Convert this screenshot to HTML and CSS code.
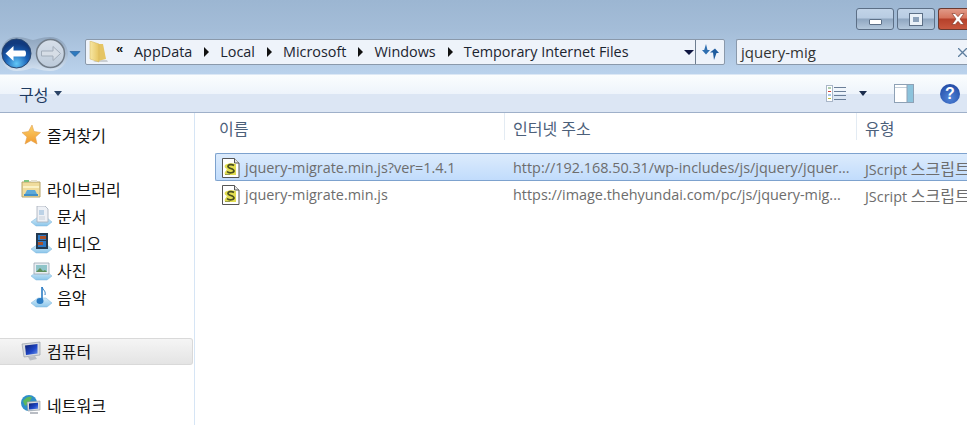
FILE: index.html
```html
<!DOCTYPE html>
<html lang="ko">
<head>
<meta charset="utf-8">
<title>Temporary Internet Files</title>
<link rel="stylesheet" href="styles.css">
</head>
<body>
<svg class="defs" width="0" height="0"><defs>
  <radialGradient id="gBack" cx="50%" cy="85%" r="70%"><stop offset="0" stop-color="#62c8f7"/><stop offset=".55" stop-color="#1a62b8"/><stop offset="1" stop-color="#113a7e"/></radialGradient>
  <linearGradient id="gFwd" x1="0" y1="0" x2="0" y2="1"><stop offset="0" stop-color="#d7dfe9"/><stop offset="1" stop-color="#bccada"/></linearGradient>
  <linearGradient id="gLobe" x1="0" y1="0" x2="0" y2="1"><stop offset="0" stop-color="#8ea4bd"/><stop offset=".5" stop-color="#a9bdd4"/><stop offset="1" stop-color="#d5e3f2"/></linearGradient>
  <linearGradient id="gFolder" x1="0" y1="0" x2="1" y2="0"><stop offset="0" stop-color="#f7e7a4"/><stop offset="1" stop-color="#e6c562"/></linearGradient>
  <linearGradient id="gStar" x1="0" y1="0" x2="0" y2="1"><stop offset="0" stop-color="#fbd26a"/><stop offset="1" stop-color="#f29a2e"/></linearGradient>
  <linearGradient id="gPlate" x1="0" y1="0" x2="0" y2="1"><stop offset="0" stop-color="#d3ebf9"/><stop offset="1" stop-color="#8cc6ea"/></linearGradient>
  <linearGradient id="gScreen" x1="0" y1="0" x2="1" y2="1"><stop offset="0" stop-color="#0b1c6a"/><stop offset=".6" stop-color="#1f47c8"/><stop offset="1" stop-color="#6d96ea"/></linearGradient>
  <symbol id="js" viewBox="0 0 18 20"><path d="M.5.500h12l4.500 4.500v14.500H.5z" fill="#fff" stroke="#555"/><path d="M12.500.500v4.500H17" fill="#e6e6e6" stroke="#555"/><path d="M3 7c3-2 8-2 11-1v11H5c-2 0-3-1-2-3l2-3c-2-1-3-2-2-4z" fill="#e3de52"/><path d="M12 7.500c-2-1.500-6-1-6 1 0 2.500 6 1.500 6 4.500 0 2-5 2.500-7 .5" fill="none" stroke="#4a4f20" stroke-width="1.700"/><path d="M3 16.500h5" stroke="#9aa04a"/></symbol>
  <symbol id="plate" viewBox="0 0 21 21"><path d="M0 16l7-5h8l6 5-5 4H5z" fill="url(#gPlate)" stroke="#7fb7dc" stroke-width=".5"/></symbol>
</defs></svg>
<div class="window">
  <header class="chrome">
    <div class="caption">
      <button class="capbtn"><span class="glyph-min"></span></button>
      <button class="capbtn"><span class="glyph-max"></span></button>
      <button class="capbtn close"><svg width="14" height="12" viewBox="0 0 14 12"><path d="M1 .5h3.200L7 3.700 9.800.5H13L9 6l4 5.500H9.800L7 8.300 4.200 11.500H1L5 6z" fill="#fff" stroke="#7a3020" stroke-width=".6"/></svg></button>
    </div>
    <div class="navrow">
      <svg class="navgroup" width="85" height="36" viewBox="0 0 85 36">
        <path d="M17 1c9 0 13 3 16 3s8-3 17-3c10 0 18 7 18 17s-8 17-18 17c-9 0-14-3-17-3s-7 3-16 3C7 35 1 28 1 18S7 1 17 1z" fill="url(#gLobe)"/>
        <circle cx="16.500" cy="17.500" r="14.500" fill="url(#gBack)" stroke="#29466f"/>
        <path d="M5.500 17.500l8-7.500v4.500h11c2 0 2 6 0 6h-11v4.500z" fill="#fff"/>
        <circle cx="50.500" cy="17.500" r="14" fill="url(#gFwd)" stroke="#717c88" stroke-width="1.500"/>
        <path d="M60.500 17.500l-7.500-7v4.500H41.500v5H53v4.500z" fill="#d6dde6" stroke="#a2adba"/>
        <path d="M70 15.500h10l-5 5z" fill="#2c79bf" stroke="#1d5896" stroke-width=".6"/>
      </svg>
      <div class="address">
        <svg class="folder" width="19" height="22" viewBox="0 0 19 22"><path d="M8 19h10l1 2H4z" fill="#c9ced3"/><path d="M9 3h5l3 15-8 2z" fill="#e5c565"/><path d="M1 0l9 3v18l-9-3z" fill="url(#gFolder)" stroke="#d0b25a" stroke-width=".5"/></svg>
        <span class="chev">«</span>
        <span class="crumb">AppData</span><i class="sep"></i>
        <span class="crumb">Local</span><i class="sep"></i>
        <span class="crumb">Microsoft</span><i class="sep"></i>
        <span class="crumb">Windows</span><i class="sep"></i>
        <span class="crumb">Temporary Internet Files</span>
        <span class="addr-drop"></span>
        <span class="refresh"><svg width="17" height="17" viewBox="0 0 17 17"><path d="M4 0l1.500 6H8l-4 4.500L0 6h2.200z" fill="#2f6fb0"/><path d="M12 16l-1-7.500H8l5-4 4 4.500h-2.500z" fill="#1f5c9e"/></svg></span>
      </div>
      <div class="search">
        <span>jquery-mig</span>
        <svg class="clear" width="9" height="9" viewBox="0 0 9 9"><path d="M0 0l9 9M9 0L0 9" stroke="#5f7f9f" stroke-width="1.300"/></svg>
      </div>
    </div>
    <div class="toolbar">
      <span class="organize">구성</span><span class="tri"></span>
      <span class="tools">
        <svg width="20" height="17" viewBox="0 0 20 17"><rect x=".5" y=".5" width="6" height="16" fill="#fff" stroke="#a9b6c8"/><path d="M2 3h3" stroke="#5a9a5a"/><path d="M2 6.500h3" stroke="#d0403a"/><path d="M2 10h3" stroke="#4a90d0"/><path d="M2 13.500h3" stroke="#c0c040"/><path d="M8 2.500h12M8 6.500h12M8 10.500h12M8 14.500h12" stroke="#6b7f99"/></svg>
        <span class="tri dark"></span>
        <svg class="pane" width="20" height="19" viewBox="0 0 20 19"><rect x=".5" y=".5" width="19" height="18" fill="#fff" stroke="#8ea1b5"/><rect x="13" y="1" width="6" height="17" fill="#8cc3dc"/><path d="M1 3.500h12" stroke="#c3ced9"/><path d="M13 1v17" stroke="#8ea1b5"/></svg>
        <span class="help">?</span>
      </span>
    </div>
  </header>
  <div class="body">
    <nav class="sidebar">
      <div class="row">
        <svg class="ico" width="20" height="20" viewBox="0 0 20 20"><path d="M11 0l2 6.500 6.500 1-5 4.500 1.500 7-6-3.500L4 19l2-7L1 7.500 7.500 6.500z" fill="url(#gStar)" stroke="#e0a050" stroke-width=".6"/></svg>
        <span>즐겨찾기</span>
      </div>
      <div class="gap"></div>
      <div class="row">
        <svg class="ico" width="20" height="20" viewBox="0 0 20 20"><path d="M1 3h18v15H1z" fill="#f0dc9c" stroke="#b5a46c"/><path d="M3 1h5v2H3z" fill="#7fc47f"/><path d="M10 1h6v2h-6z" fill="#e5e1d0"/><path d="M2 7h16v2H2z" fill="#fbf2c6"/><path d="M6 11h8l2 4H4z" fill="#5ea9d8"/><path d="M3 15h14v2H3z" fill="#3f8fc8"/></svg>
        <span>라이브러리</span>
      </div>
      <div class="row sub">
        <svg class="ico" width="21" height="21" viewBox="0 0 21 21"><use href="#plate"/><path d="M6 0h8l3 3v13H6z" fill="#eef1f6" stroke="#a5adba" stroke-width=".8"/><path d="M8 4h5v5H8z" fill="#bcd2e6"/><path d="M8 11h6M8 13h6" stroke="#c8d0da"/></svg>
        <span>문서</span>
      </div>
      <div class="row sub">
        <svg class="ico" width="21" height="21" viewBox="0 0 21 21"><use href="#plate"/><path d="M5 0h12v16H5z" fill="#24394f"/><path d="M7 2h8v5H7z" fill="#2c79c7"/><path d="M7 8h8v6H7z" fill="#2c79c7"/><path d="M9 3h6v3H9zM7 9h5v3H7z" fill="#a8512a"/></svg>
        <span>비디오</span>
      </div>
      <div class="row sub">
        <svg class="ico" width="21" height="21" viewBox="0 0 21 21"><use href="#plate"/><path d="M3 3h15v11H3z" fill="#e9eef3" stroke="#9aa5b1" stroke-width=".8"/><path d="M5 5h11v7H5z" fill="#8fc4c9"/><path d="M5 12l4-4 3 3 2-1 2 2z" fill="#5f8f5a"/></svg>
        <span>사진</span>
      </div>
      <div class="row sub">
        <svg class="ico" width="21" height="21" viewBox="0 0 21 21"><use href="#plate"/><path d="M11 0v13" stroke="#2b7cc4" stroke-width="1.600"/><path d="M11 0c1 3 4 4 3 8" stroke="#2b7cc4" fill="none"/><ellipse cx="9" cy="14" rx="3.500" ry="3" fill="#2b7cc4"/></svg>
        <span>음악</span>
      </div>
      <div class="gap"></div>
      <div class="row active">
        <svg class="ico" width="20" height="20" viewBox="0 0 20 20"><path d="M1 3l18-2v13L3 16z" fill="#d8dbe0" stroke="#8c939c" stroke-width=".6"/><path d="M4 4.500l12.500-1.500v9.500L5 14z" fill="url(#gScreen)"/><path d="M7 16l7-1 2 3-7 1.500z" fill="#b9bdc4"/></svg>
        <span>컴퓨터</span>
      </div>
      <div class="gap"></div>
      <div class="row">
        <svg class="ico" width="20" height="20" viewBox="0 0 20 20"><circle cx="8" cy="8" r="8" fill="#2f8fc9"/><path d="M2 6c3-4 6-5 9-4L8 8l-4 3z" fill="#5cb85c"/><path d="M6 7l13-1v9L7 16z" fill="#d8dbe0" stroke="#8c939c" stroke-width=".6"/><path d="M8 8.500l9-.8v6l-9 .8z" fill="url(#gScreen)"/><path d="M9 17h8v2H9z" fill="#b9bdc4"/></svg>
        <span>네트워크</span>
      </div>
    </nav>
    <main class="list">
      <div class="cols head">
        <div class="c1">이름</div>
        <div class="c2">인터넷 주소</div>
        <div class="c3">유형</div>
      </div>
      <div class="cols file selected">
        <div class="c1"><svg class="jsico" width="18" height="20" viewBox="0 0 18 20"><use href="#js"/></svg>jquery-migrate.min.js?ver=1.4.1</div>
        <div class="c2">http://192.168.50.31/wp-includes/js/jquery/jquer...</div>
        <div class="c3">JScript <span class="ko">스크립트</span></div>
      </div>
      <div class="cols file">
        <div class="c1"><svg class="jsico" width="18" height="20" viewBox="0 0 18 20"><use href="#js"/></svg>jquery-migrate.min.js</div>
        <div class="c2">https://image.thehyundai.com/pc/js/jquery-mig...</div>
        <div class="c3">JScript <span class="ko">스크립트</span></div>
      </div>
    </main>
  </div>
</div>
</body>
</html>
```

FILE: styles.css
```css
* { box-sizing: border-box; }
html, body { margin: 0; height: 100%; }
body {
  width: 967px;
  height: 425px;
  overflow: hidden;
  background: #fff;
  font-family: "Open Sans", "Noto Sans CJK KR", sans-serif;
  font-size: 14.4px;
}
.window { display: flex; flex-direction: column; height: 425px; }
.chrome {
  height: 113px;
  flex: none;
  background: linear-gradient(#9cb6d2 0, #a4bdd8 30px, #bad2ec 74px);
  border-bottom: 1px solid #9fb0c9;
  display: flex;
  flex-direction: column;
}
.caption { height: 39px; padding-top: 8px; display: flex; justify-content: flex-end; gap: 3px; }
.capbtn {
  width: 38px; height: 22px; padding: 0;
  border: 1px solid #5c6f86; border-radius: 3px;
  background: linear-gradient(#c2d4e8 0, #b8cce2 45%, #8fa6c0 50%, #b4c8dc 100%);
  display: flex; align-items: center; justify-content: center;
}
.capbtn.close {
  width: 29px; border-color: #6b3a30; border-right: 0; border-radius: 3px 0 0 3px;
  background: linear-gradient(#e09a88 0, #d5735c 45%, #b5402a 50%, #c8573e 100%);
  justify-content: flex-start; padding-left: 12px;
}
.glyph-min { width: 13px; height: 6px; margin-top: 6px; background: #fff; border: 1px solid #5c6f86; border-radius: 1px; }
.glyph-max { width: 12px; height: 11px; border: 3px solid #eaf1f8; outline: 1px solid #5c6f86; background: #8ba1ba; }
.navrow { height: 26px; display: flex; align-items: stretch; }
.navgroup { flex: none; margin-top: -3px; }
.address {
  width: 640px; flex: none; display: flex; align-items: center; position: relative;
  background: #eef3fa; border: 1px solid #8a99ab; border-radius: 2px;
  color: #1b2430; padding: 0 0 2px 3px;
}
.folder { margin: 2px 8px 0 0; flex: none; }
.chev { width: 18px; font: bold 13px/1 "Liberation Sans", sans-serif; margin-top: -5px; color: #111; }
.crumb { white-space: nowrap; }
.sep { width: 0; height: 0; margin: 2px 11px 0 12px; border-left: 5px solid #111; border-top: 5px solid transparent; border-bottom: 5px solid transparent; }
.addr-drop { position: absolute; right: 30px; top: 10px; width: 0; height: 0; border: 5px solid transparent; border-top: 5px solid #0f1640; border-bottom: 0; }
.refresh { position: absolute; right: 0; top: 0; bottom: 0; width: 29px; border-left: 1px solid #6d7d90; display: flex; align-items: center; justify-content: center; }
.search {
  width: 231px; flex: none; margin-left: 11px; padding-left: 4px;
  background: #eef3fa; border: 1px solid #8a99ab; border-right: 0; border-radius: 2px 0 0 2px;
  display: flex; align-items: center; justify-content: space-between; color: #333; font-size: 15px;
}
.toolbar {
  margin-top: 9px; flex: 1;
  border-top: 1px solid #dce8f5;
  background: linear-gradient(#fbfdfe 0, #eef4fb 50%, #dce6f4 52%, #dce6f4 100%);
  display: flex; align-items: center; padding-left: 19px; color: #1e3a5f;
}
.organize { margin-right: 6px; font-size: 16px; }
.tri { width: 0; height: 0; border: 4px solid transparent; border-top: 5px solid #2a4366; border-bottom: 0; }
.tools { margin-left: auto; display: flex; align-items: center; padding-right: 7px; }
.tri.dark { margin-left: 13px; border-top-color: #1a2c4c; }
.pane { margin-left: 27px; }
.help {
  margin-left: 26px; width: 20px; height: 20px; border-radius: 50%;
  background: radial-gradient(circle at 50% 70%, #4f84d8, #1a3f9b);
  color: #fff; font: bold 16px/20px "Liberation Sans", sans-serif; text-align: center;
}
.body { flex: 1; display: flex; min-height: 0; }
.sidebar { width: 195px; flex: none; border-right: 1px solid #d6e5f5; padding: 8.500px 1px 0 0; color: #111; font-size: 16px; }
.row { height: 27px; display: flex; align-items: center; padding-left: 21px; gap: 6px; white-space: nowrap; }
.row span { margin-top: -1px; }
.row.sub { padding-left: 31px; gap: 5px; }
.row.active {
  border: 1px solid #d9d9d9; border-left: 0; border-radius: 0 3px 3px 0;
  background: linear-gradient(#f5f5f5, #e4e4e4);
}
.gap { height: 27px; }
.ico { flex: none; }
.list { flex: 1; min-width: 0; overflow: hidden; padding-left: 20px; }
.cols { display: flex; white-space: nowrap; }
.c1 { width: 290px; flex: none; padding-left: 4px; display: flex; align-items: center; }
.c2 { width: 352px; flex: none; padding-left: 8px; }
.c3 { flex: none; padding-left: 8px; }
.ko { font-size: 16px; }
.head { height: 27px; align-items: center; color: #4c607a; margin-bottom: 13px; font-size: 16px; }
.head .c1, .head .c2, .head .c3 { display: block; height: 27px; line-height: 32px; }
.head .c2, .head .c3 { box-shadow: -1px 0 0 #e3ebf3; }
.file { height: 27px; align-items: center; color: #6d6d6d; border: 1px solid transparent; border-right: 0; border-radius: 2px 0 0 2px; }
.file .c1 { width: 289px; padding-left: 6px; }
.selected { height: 28px; border-color: #7da2ce; background: linear-gradient(#dcebfc, #c1dcfc); }
.selected > div { margin-top: 1px; }
.jsico { margin-right: 5px; flex: none; }
.defs { position: absolute; }
```
